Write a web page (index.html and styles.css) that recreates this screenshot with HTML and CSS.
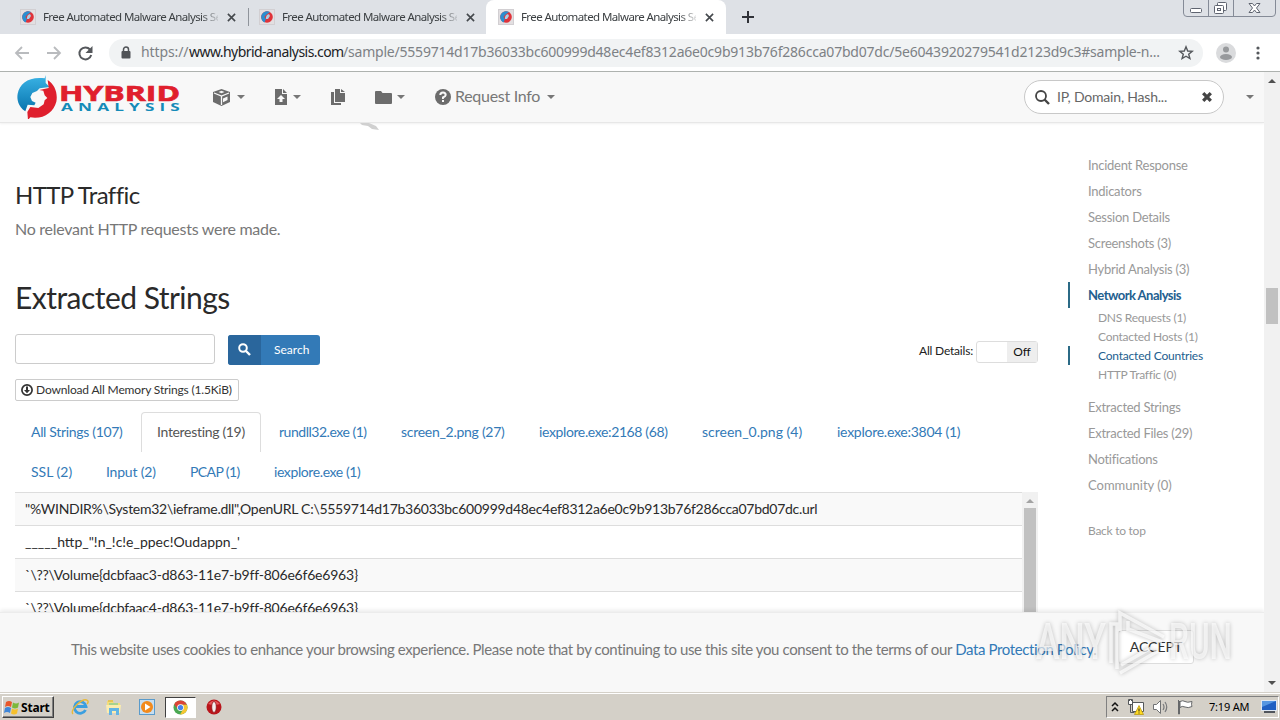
FILE: index.html
```html
<!DOCTYPE html>
<html lang="en">
<head>
    <meta charset="UTF-8">
    <meta name="viewport" content="width=device-width, initial-scale=1.0">
    <title>Free Automated Malware Analysis Service</title>
    <link rel="stylesheet" href="styles.css">
</head>
<body>

    <!-- Shared symbols -->
    <svg class="defs" width="0" height="0">
        <defs>
            <linearGradient id="blue" x1="0" y1="0" x2="0" y2="1"><stop offset="0" stop-color="#3bb4e6"/><stop offset="1" stop-color="#0874ae"/></linearGradient>
            <symbol id="swirl" viewBox="18 12 123 132">
                <path fill="url(#blue)" d="M107 12v24l12 12-30 4-8 8-14 6-6 12 5 12 11 5-4 8-20-2-7 20C24 106 20 84 23 68 29 38 56 16 104 22z"/>
                <path fill="#df1f2d" d="M113 27C134 40 144 66 139 92 131 124 99 146 61 139l-7 8-2-24 9-15 24 3 16-11 3-12 8-7-8-8-4-14-12-2 28-6z"/>
            </symbol>
            <symbol id="favicon" viewBox="0 0 16 16">
                <path fill="#d2cfd2" d="M0 0h16v16H0z"/>
                <path fill="#e3dfe1" d="M1 1h14v14H1z"/>
                <circle cx="8" cy="8" r="5.800" fill="#e0333a"/>
                <path fill="#2b8fd0" d="M11 3C7 1 2 4 2.200 8.500 2.400 11 4 13 5.500 13.500L7 10 5.500 8 7 6z"/>
                <path fill="#a9cfe6" d="M8 6l2-1 1 2-2 3-2 0 0-2z"/>
            </symbol>
            <symbol id="close" viewBox="0 0 10 10"><path d="M1 1l8 8M9 1L1 9" stroke="#45494d" stroke-width="1.800"/></symbol>
        </defs>
    </svg>

    <!-- Browser tabs -->
    <div class="tabstrip">
        <div class="tab">
            <svg class="favicon"><use href="#favicon"/></svg>
            <span class="tab-title">Free Automated Malware Analysis Se</span>
            <svg class="tab-close"><use href="#close"/></svg>
        </div>
        <div class="tab tab-second">
            <svg class="favicon"><use href="#favicon"/></svg>
            <span class="tab-title">Free Automated Malware Analysis Se</span>
            <svg class="tab-close"><use href="#close"/></svg>
        </div>
        <div class="tab tab-active">
            <svg class="favicon"><use href="#favicon"/></svg>
            <span class="tab-title">Free Automated Malware Analysis Se</span>
            <svg class="tab-close"><use href="#close"/></svg>
        </div>
        <svg class="new-tab" viewBox="0 0 12 12"><path d="M6 0v12M0 6h12" stroke="#303238" stroke-width="2"/></svg>
        <svg class="window-buttons" viewBox="0 0 94 18">
            <path d="M.5 0v13q0 3.500 3.500 3.500h85q3.500 0 3.500-3.500V0M25.500 0v16M50.500 0v16" fill="none" stroke="#858b97"/>
            <g fill="#fff" stroke="#5f6470">
                <rect x="7.500" y="8.500" width="11" height="4" rx="1"/>
                <rect x="34.500" y="2.500" width="9" height="8" rx="1"/>
                <rect x="31.500" y="5.500" width="9" height="8" rx="1"/>
                <rect x="34.500" y="8.500" width="3" height="2"/>
                <path d="M66 3.500h3.500l2 2.500 2-2.500H77L73.500 8l3.500 4.500h-3.500l-2-2.500-2 2.500H66L69.500 8z"/>
            </g>
        </svg>
    </div>

    <!-- Address bar -->
    <div class="toolbar">
        <svg class="nav-arrows" viewBox="0 0 80 18" fill="none" stroke="#b9bbbe" stroke-width="1.800">
            <path d="M15 9H2M8 3L2 9l6 6M33 9h13M40 3l6 6-6 6"/>
            <path stroke="#55585c" stroke-width="2" d="M76 5.500A6 6 0 1 0 77.200 11"/>
            <path fill="#55585c" stroke="none" d="M78.500 2v7h-7z"/>
        </svg>
        <div class="omnibox">
            <svg class="lock" viewBox="0 0 10 13"><path d="M2.500 6V3.500a2.500 2.500 0 0 1 5 0V6" fill="none" stroke="#505357" stroke-width="1.500"/><rect x=".5" y="5" width="9" height="7.500" rx="1" fill="#505357"/></svg>
            <span class="url url-scheme">https://</span><span class="url url-host">www.hybrid-analysis.com</span><span class="url url-path">/sample/5559714d17b36033bc600999d48ec4ef8312a6e0c9b913b76f286cca07bd07dc/5e6043920279541d2123d9c3#sample-n...</span>
            <svg class="star" viewBox="0 0 16 16"><path d="M8 1.800l1.700 4.200 4.500.300-3.500 2.900 1.200 4.400L8 11.200l-3.900 2.400 1.200-4.400L1.800 6.300 6.300 6z" fill="none" stroke="#55585c" stroke-width="1.400"/></svg>
        </div>
        <svg class="avatar" viewBox="0 0 20 20"><circle cx="10" cy="10" r="10" fill="#dadbdd"/><circle cx="10" cy="6.500" r="3" fill="#97999c"/><ellipse cx="10" cy="14" rx="6" ry="3" fill="#97999c"/></svg>
        <svg class="dots" viewBox="0 0 4 16" fill="#55585c"><circle cx="2" cy="3" r="1.600"/><circle cx="2" cy="8" r="1.600"/><circle cx="2" cy="13" r="1.600"/></svg>
    </div>

    <div class="viewport">
        <div class="page">

            <!-- Navbar -->
            <div class="navbar">
                <svg class="logo" viewBox="0 0 166 44">
                    <use href="#swirl" width="41" height="44"/>
                    <text x="43" y="25.500" textLength="121" lengthAdjust="spacingAndGlyphs" class="logo-top">HYBRID</text>
                    <text x="45" y="36" textLength="124" lengthAdjust="spacingAndGlyphs" class="logo-bottom">ANALYSIS</text>
                </svg>
                <div class="menu menu-box">
                    <svg width="17" height="17" viewBox="0 0 17 17"><path fill="#6c6c6c" d="M8.500 0L17 3v10l-8.500 4L0 13V3z"/><path d="M1 4l7.500 3L16 4M8.500 7v9" fill="none" stroke="#f8f8f8" stroke-width="1.300"/><path fill="#f8f8f8" d="M10 9.500l4.500-2v3.500L10 13.200zM5.500 3l3-1.200L11.500 3l-3 1.200z"/></svg>
                    <span class="caret"></span>
                </div>
                <div class="menu menu-upload">
                    <svg width="12" height="16" viewBox="0 0 12 16"><path fill="#6c6c6c" d="M0 0h7v5h5v11H0zM8 0l4 4H8z"/><path fill="#f8f8f8" d="M6 6l4 4H7.500v3h-3v-3H2z"/></svg>
                    <span class="caret"></span>
                </div>
                <div class="menu menu-files">
                    <svg width="14" height="16" viewBox="0 0 14 16"><path fill="#6c6c6c" d="M4 0h5v4h5v9H4zM10 0l4 3h-4zM0 3h3v11h7v2H0z"/></svg>
                </div>
                <div class="menu menu-folder">
                    <svg width="17" height="13" viewBox="0 0 17 13"><path fill="#6c6c6c" d="M0 1q0-1 1-1h5l1.500 2H16q1 0 1 1v9q0 1-1 1H1q-1 0-1-1z"/></svg>
                    <span class="caret"></span>
                </div>
                <div class="menu menu-info">
                    <svg width="16" height="16" viewBox="0 0 16 16"><circle cx="8" cy="8" r="8" fill="#6c6c6c"/><path d="M5.300 6q0-2.500 2.700-2.500T10.700 6Q10.700 7.300 8 8.500V10" fill="none" stroke="#f8f8f8" stroke-width="2"/><path fill="#f8f8f8" d="M7 11h2v2H7z"/></svg>
                    <span class="menu-label">Request Info</span>
                    <span class="caret"></span>
                </div>
                <div class="search-pill">
                    <svg width="15" height="15" viewBox="0 0 15 15" fill="none" stroke="#444"><circle cx="6" cy="6" r="5" stroke-width="1.800"/><path d="M9.500 9.500L14 14" stroke-width="2.400"/></svg>
                    <span class="search-hint">IP, Domain, Hash...</span>
                    <svg width="10" height="10" viewBox="0 0 10 10"><path d="M1.200 1.200l7.600 7.600M8.800 1.200L1.200 8.800" stroke="#444" stroke-width="3.300"/></svg>
                </div>
                <span class="caret caret-last"></span>
            </div>

            <div class="content">
                <div class="main">
                    <svg class="map-tip" viewBox="0 0 22 8"><path fill="#d0d0d0" d="M1 0h9l7 3 3 4-7-1-4-3-6-1z"/></svg>
                    <h3>HTTP Traffic</h3>
                    <p class="lead">No relevant HTTP requests were made.</p>
                    <h2>Extracted Strings</h2>

                    <div class="controls">
                        <div class="input"></div>
                        <div class="btn-search">
                            <span class="btn-icon"><svg width="13" height="13" viewBox="0 0 13 13" fill="none" stroke="#fff"><circle cx="5" cy="5" r="3.800" stroke-width="2"/><path d="M8 8l4 4" stroke-width="2.400"/></svg></span>
                            <span class="btn-label">Search</span>
                        </div>
                        <span class="details-label">All Details:</span>
                        <div class="toggle"><span class="toggle-off">Off</span></div>
                    </div>

                    <div class="btn-download">
                        <svg width="12" height="12" viewBox="0 0 12 12"><circle cx="6" cy="6" r="5.100" fill="none" stroke="#333" stroke-width="1.700"/><path fill="#333" d="M5 2.500h2V6h2L6 9.200 3 6h2z"/></svg>
                        <span>Download All Memory Strings (1.5KiB)</span>
                    </div>

                    <ul class="nav-tabs">
                        <li>All Strings (107)</li>
                        <li class="active">Interesting (19)</li>
                        <li>rundll32.exe (1)</li>
                        <li>screen_2.png (27)</li>
                        <li>iexplore.exe:2168 (68)</li>
                        <li>screen_0.png (4)</li>
                        <li>iexplore.exe:3804 (1)</li>
                        <li>SSL (2)</li>
                        <li>Input (2)</li>
                        <li>PCAP (1)</li>
                        <li>iexplore.exe (1)</li>
                    </ul>

                    <div class="strings">
                        <div class="rows">
                            <div class="row"><span class="str-url">"%WINDIR%\System32\ieframe.dll",OpenURL C:\5559714d17b36033bc600999d48ec4ef8312a6e0c9b913b76f286cca07bd07dc.url</span></div>
                            <div class="row"><span class="str-http">_____http_"!n_!c!e_ppec!Oudappn_'</span></div>
                            <div class="row"><span class="str-vol">`\??\Volume{dcbfaac3-d863-11e7-b9ff-806e6f6e6963}</span></div>
                            <div class="row"><span class="str-vol">`\??\Volume{dcbfaac4-d863-11e7-b9ff-806e6f6e6963}</span></div>
                        </div>
                        <div class="inner-scroll">
                            <span class="arrow-up arrow-pale"></span>
                            <span class="inner-thumb"></span>
                        </div>
                    </div>
                </div>

                <!-- Side navigation -->
                <div class="sidenav">
                    <a>Incident Response</a>
                    <a>Indicators</a>
                    <a>Session Details</a>
                    <a>Screenshots (3)</a>
                    <a>Hybrid Analysis (3)</a>
                    <a class="current">Network Analysis</a>
                    <div class="sub">
                        <a>DNS Requests (1)</a>
                        <a>Contacted Hosts (1)</a>
                        <a class="current">Contacted Countries</a>
                        <a>HTTP Traffic (0)</a>
                    </div>
                    <a>Extracted Strings</a>
                    <a>Extracted Files (29)</a>
                    <a>Notifications</a>
                    <a class="community">Community (0)</a>
                    <a class="back">Back to top</a>
                </div>
            </div>

            <!-- Cookie notice -->
            <div class="cookie">
                <span class="cookie-text">This website uses cookies to enhance your browsing experience. Please note that by continuing to use this site you consent to the terms of our <span class="cookie-link">Data Protection Policy</span>.</span>
                <span class="accept">ACCEPT</span>
            </div>
        </div>

        <div class="scrollbar">
            <span class="arrow-up"></span>
            <span class="thumb"></span>
            <span class="arrow-down"></span>
        </div>
    </div>

    <!-- Taskbar -->
    <div class="taskbar">
        <div class="start">
            <svg width="16" height="15" viewBox="0 0 16 15"><path fill="#e8572a" d="M2 2q3-2 6 0L7 7Q4 5 1 7z"/><path fill="#7cb83a" d="M9 2.500q3 2 6 0L14 7.500q-3 2-6 0z"/><path fill="#3f86d8" d="M1 8q3-2 6 0l-1 5q-3-2-6 0z"/><path fill="#f6c02c" d="M8 8.500q3 2 6 0l-1 5q-3 2-6 0z"/></svg>
            <span>Start</span>
        </div>
        <svg class="quick quick-ie" viewBox="0 0 18 18"><path d="M14.500 12A5.800 5.800 0 1 1 15 8.500H5" fill="none" stroke="#3b9fe0" stroke-width="2.800"/><path d="M2 16C-2 12 12-1 16.500 2.500 17.500 3.500 17 5 16 6" fill="none" stroke="#e8b93a" stroke-width="1.400"/></svg>
        <svg class="quick" viewBox="0 0 18 18"><path fill="#f3dc7c" d="M2 3h6l1 2h6v10H2z"/><path fill="#e6c455" d="M3 2h5v2H3z"/><path fill="#a7d28d" d="M4 5h9v2H4z"/><path fill="#fbecae" d="M1 7h15l-1 8H2z"/><path fill="#62b4e4" d="M4 10h10v7h-3v-4H7v4H4z"/></svg>
        <svg class="quick" viewBox="0 0 18 18"><rect x="1.500" y="1.500" width="15" height="15" fill="#c7def0" stroke="#5a9bcb"/><circle cx="9" cy="9" r="6" fill="#f28a1c"/><path fill="#fff" d="M7 5.500l5.500 3.500L7 12.500z"/></svg>
        <div class="task-active">
            <svg width="15" height="15" viewBox="0 0 16 16"><circle cx="8" cy="8" r="7.500" fill="#4aa852"/><path fill="#dc4437" d="M1.300 4.500A7.500 7.500 0 0 1 14.800 5H8L5 9.500z"/><path fill="#f6c632" d="M14.800 5A7.500 7.500 0 0 1 7.500 15.500L11 9.500 9 5z"/><circle cx="8" cy="8" r="3.600" fill="#fff"/><circle cx="8" cy="8" r="2.800" fill="#4583ec"/></svg>
        </div>
        <svg class="quick quick-opera" viewBox="0 0 18 18"><circle cx="9" cy="9" r="7.500" fill="#b9151b"/><path fill="#e8565a" d="M3 6q6-7 12 0-6 2-12 0z"/><ellipse cx="9" cy="9" rx="2.300" ry="5.500" fill="#f4eeee" stroke="#8c1418" stroke-width=".8"/></svg>
        <div class="tray">
            <svg width="10" height="12" viewBox="0 0 10 12" fill="none" stroke="#111" stroke-width="1.500"><path d="M2 5l3-3 3 3M2 10l3-3 3 3"/></svg>
            <svg width="16" height="16" viewBox="0 0 16 16"><path fill="#fff" stroke="#55585a" d="M4.500 3.500h11v9h-11zM.5.500h4v5h-4z"/><path d="M2.500 5.500v8h4M1.500 0v2M3.500 0v2" fill="none" stroke="#55585a"/><path fill="#ffda22" stroke="#b29108" stroke-width=".7" d="M11 6.500l4.500 9h-9z"/><path d="M11 9.500v3m0 1v1" stroke="#222"/></svg>
            <svg width="17" height="16" viewBox="0 0 17 16"><path fill="#fff" stroke="#707274" d="M1.500 5.500h3l4-4v13l-4-4h-3z"/><path d="M11 5q2 3 0 6M13 3q3.500 5 0 10" fill="none" stroke="#77797b" stroke-width="1.200"/></svg>
            <svg width="17" height="16" viewBox="0 0 17 16"><path fill="#fff" stroke="#66686a" d="M1.500 1v14h1V2M3 2.500q3-1.500 5 0t7 0q-1 3 0 5-4 2-7 .5t-5 .5z"/></svg>
            <span class="clock">7:19 AM</span>
            <svg width="16" height="14" viewBox="0 0 16 14"><path fill="#dfe7f2" d="M0 0h16v11H0z"/><path fill="#1f5fc2" d="M1 1h14v9H1z"/><path fill="#5596e2" d="M1 1h14L1 7z"/><path fill="#50555c" d="M3 11h11v2H3z"/></svg>
        </div>
    </div>

    <!-- Watermark -->
    <svg class="watermark" viewBox="0 0 214 68">
        <text x="2" y="50.500" textLength="70" lengthAdjust="spacingAndGlyphs">ANY</text>
        <text x="135" y="50.500" textLength="63" lengthAdjust="spacingAndGlyphs">RUN</text>
        <path d="M77 55V16h6v45M86 23V5l44 24M94 23V13M94 21l34 13M86 65l38-22M87 57l30-17"/>
    </svg>

</body>
</html>
```
FILE: styles.css
```css
* {
    box-sizing: border-box;
}

body {
    margin: 0;
    width: 1280px;
    height: 720px;
    overflow: hidden;
    display: flex;
    flex-direction: column;
    font-family: Lato, sans-serif;
    font-size: 14px;
    color: #333;
    background-color: #fff;
    white-space: nowrap;
}

svg {
    flex: none;
}

.defs {
    position: absolute;
}

/* Browser tabs */
.tabstrip {
    height: 34px;
    flex: none;
    display: flex;
    background-color: #dee1e6;
    font-family: "Noto Sans", sans-serif;
    font-size: 11.5px;
}

.tab {
    width: 248px;
    height: 34px;
    padding-left: 20px;
    display: flex;
    align-items: center;
    color: #3c4043;
}

.tab-second {
    width: 238px;
    padding-left: 11px;
    background: linear-gradient(#8f949b, #8f949b) 0 8px / 1px 18px no-repeat;
}

.tab-active {
    width: 240px;
    padding-left: 12px;
    background-color: #fff;
    border-radius: 8px 8px 0 0;
}

.favicon {
    width: 16px;
    height: 16px;
}

.tab-title {
    width: 175px;
    margin: 0 0 1px 7px;
    letter-spacing: -0.6px;
    -webkit-mask-image: linear-gradient(to right, #000 158px, transparent 178px);
    mask-image: linear-gradient(to right, #000 158px, transparent 178px);
}

.tab-close {
    width: 9px;
    height: 9px;
    margin-left: 9px;
}

.new-tab {
    width: 12px;
    height: 12px;
    margin: 11px 0 0 16px;
}

.window-buttons {
    width: 94px;
    height: 18px;
    margin-left: auto;
    margin-right: 3px;
}

/* Address bar */
.toolbar {
    height: 38px;
    flex: none;
    display: flex;
    align-items: center;
    border-bottom: 1px solid #aeb2af;
    background-color: #fff;
}

.nav-arrows {
    width: 80px;
    height: 18px;
    margin-left: 14px;
}

.omnibox {
    width: 1094px;
    height: 28px;
    margin-left: 15px;
    padding-left: 12px;
    display: flex;
    align-items: center;
    border-radius: 14px;
    background-color: #f1f3f4;
}

.lock {
    width: 10px;
    height: 13px;
    margin-right: 10px;
}

.url {
    flex: none;
    margin-bottom: 2px;
    font-family: "Noto Sans", sans-serif;
    font-size: 14px;
    color: #7d8185;
}

.url-scheme {
    width: 48px;
    letter-spacing: -0.1px;
}

.url-host {
    width: 154px;
    color: #202124;
    letter-spacing: -0.55px;
}

.url-path {
    width: 818px;
    letter-spacing: -0.21px;
}

.star {
    width: 16px;
    height: 16px;
    margin-left: 17px;
}

.avatar {
    width: 20px;
    height: 20px;
    margin-left: 13px;
}

.dots {
    width: 4px;
    height: 16px;
    margin-left: 20px;
}

/* Page viewport */
.viewport {
    height: 620px;
    flex: none;
    display: flex;
}

.page {
    position: relative;
    width: 1264px;
    overflow: hidden;
}

.scrollbar {
    width: 16px;
    display: flex;
    flex-direction: column;
    align-items: center;
    background-color: #f1f1f1;
}

.arrow-up,
.arrow-down {
    border-left: 4px solid transparent;
    border-right: 4px solid transparent;
}

.arrow-up {
    margin-top: 7px;
    border-bottom: 4px solid #505050;
}

.arrow-pale {
    border-bottom-color: #a3a3a3;
}

.arrow-down {
    margin: auto 0 7px;
    border-top: 4px solid #505050;
}

.thumb {
    width: 12px;
    height: 36px;
    margin-top: 205px;
    background-color: #c1c1c1;
}

/* Navbar */
.navbar {
    height: 51px;
    display: flex;
    align-items: center;
    background-color: #f8f8f8;
    border-bottom: 1px solid #e7e7e7;
    box-shadow: 0 1px 2px rgba(0, 0, 0, 0.06);
    color: #777;
}

.logo {
    width: 166px;
    height: 44px;
    margin-left: 16px;
}

.logo-top {
    font: 700 22px "Open Sans", sans-serif;
    fill: #e01f2d;
    stroke: #e01f2d;
    stroke-width: 0.7px;
}

.logo-bottom {
    font: 700 10px "Open Sans", sans-serif;
    letter-spacing: 3px;
    fill: #148bb8;
}

.menu {
    display: flex;
    align-items: center;
}

.caret {
    margin-left: 8px;
    border-top: 4px solid #777;
    border-left: 4px solid transparent;
    border-right: 4px solid transparent;
}

.menu-box {
    margin-left: 31px;
}

.menu-box .caret {
    margin-left: 7px;
}

.menu-upload {
    margin-left: 30px;
}

.menu-upload .caret {
    margin-left: 6px;
}

.menu-files {
    margin-left: 30px;
}

.menu-folder {
    margin-left: 30px;
}

.menu-folder .caret {
    margin-left: 5px;
}

.menu-info {
    margin-left: 30px;
}

.menu-label {
    width: 86px;
    margin: 0 0 3px 4px;
    font-size: 16px;
    letter-spacing: -0.3px;
}

.menu-info .caret {
    margin-left: 6px;
}

.search-pill {
    width: 200px;
    height: 34px;
    margin-left: auto;
    padding: 0 11px 0 10px;
    display: flex;
    align-items: center;
    border: 1px solid #c8c8c8;
    border-radius: 17px;
    background-color: #fff;
}

.search-hint {
    width: 145px;
    margin: 0 0 2px 7px;
    color: #666;
    letter-spacing: -0.2px;
}

.caret-last {
    margin: 0 10px 0 22px;
}

/* Main content */
.content {
    display: flex;
}

.main {
    width: 1023px;
    margin-left: 15px;
}

.map-tip {
    display: block;
    width: 22px;
    height: 8px;
    margin-left: 344px;
}

h2,
h3 {
    margin: 0;
    font-weight: 400;
    color: #2a2a2a;
}

h3 {
    margin-top: 50px;
    font-size: 24px;
    line-height: 28px;
    letter-spacing: -0.6px;
}

.lead {
    margin: 9px 0 0;
    font-size: 16px;
    line-height: 22px;
    letter-spacing: -0.27px;
    color: #777;
}

h2 {
    margin-top: 40px;
    font-size: 30px;
    line-height: 34px;
    letter-spacing: -0.53px;
}

.controls {
    margin-top: 20px;
    display: flex;
    align-items: center;
    height: 30px;
}

.input {
    width: 200px;
    height: 30px;
    border: 1px solid #ccc;
    border-radius: 3px;
}

.btn-search {
    width: 92px;
    height: 30px;
    margin: 1px 0 0 13px;
    display: flex;
    border-radius: 3px;
    overflow: hidden;
    background-color: #337ab7;
    color: #fff;
    font-size: 12px;
}

.btn-icon {
    width: 33px;
    display: flex;
    align-items: center;
    justify-content: center;
    background-color: #2a669c;
}

.btn-label {
    margin-left: 13px;
    line-height: 30px;
}

.details-label {
    width: 57px;
    margin: 3px 0 0 auto;
    color: #222;
    font-size: 12px;
    letter-spacing: -0.2px;
}

.toggle {
    width: 62px;
    height: 22px;
    margin-top: 5px;
    padding-left: 30px;
    border: 1px solid #ddd;
    border-radius: 3px;
    font-size: 12px;
    line-height: 20px;
    color: #111;
}

.toggle-off {
    display: block;
    text-align: center;
    background-color: #eee;
}

.btn-download {
    width: 224px;
    height: 22px;
    margin-top: 15px;
    padding: 0 0 1px 5px;
    display: flex;
    align-items: center;
    gap: 3px;
    border: 1px solid #ccc;
    border-radius: 2px;
    font-size: 12px;
    letter-spacing: -0.16px;
}

.nav-tabs {
    margin: 11px 0 0;
    padding: 0;
    display: flex;
    flex-wrap: wrap;
    list-style: none;
    color: #337ab7;
    letter-spacing: -0.32px;
}

.nav-tabs li {
    height: 40px;
    padding-left: 16px;
    line-height: 39px;
}

.nav-tabs .active {
    width: 120px;
    margin-right: 2px;
    padding-left: 15px;
    border: 1px solid #ddd;
    border-bottom: none;
    border-radius: 4px 4px 0 0;
    line-height: 37px;
    color: #555;
}

.nav-tabs li:nth-child(1) { width: 126px; }
.nav-tabs li:nth-child(3) { width: 122px; letter-spacing: -0.48px; }
.nav-tabs li:nth-child(4) { width: 138px; letter-spacing: -0.28px; }
.nav-tabs li:nth-child(5) { width: 163px; letter-spacing: -0.38px; }
.nav-tabs li:nth-child(6) { width: 135px; letter-spacing: 0; }
.nav-tabs li:nth-child(7) { width: 156px; letter-spacing: -0.26px; }
.nav-tabs li:nth-child(8) { width: 75px; letter-spacing: 0; }
.nav-tabs li:nth-child(9) { width: 84px; letter-spacing: -0.2px; }
.nav-tabs li:nth-child(10) { width: 84px; letter-spacing: -0.6px; }
.nav-tabs li:nth-child(11) { letter-spacing: -0.4px; }

.strings {
    display: flex;
}

.rows {
    width: 1007px;
}

.row {
    height: 33px;
    padding-left: 10px;
    border-top: 1px solid #ddd;
    line-height: 31px;
    color: #2a2a2a;
}

.row:nth-child(odd) {
    background-color: #f9f9f9;
}

.str-url {
    letter-spacing: -0.28px;
}

.str-vol {
    letter-spacing: -0.21px;
}

.inner-scroll {
    width: 16px;
    padding-right: 1px;
    display: flex;
    flex-direction: column;
    align-items: center;
    background-color: #f1f1f1;
}

.inner-thumb {
    width: 12px;
    flex: 1;
    margin-top: 5px;
    background-color: #c1c1c1;
}

/* Side navigation */
.sidenav {
    width: 196px;
    margin-left: 30px;
    padding-top: 29px;
    display: flex;
    flex-direction: column;
    color: #999;
    font-size: 13px;
    letter-spacing: -0.26px;
}

.sidenav a {
    height: 26px;
    padding-left: 20px;
    line-height: 26px;
}

.sidenav .sub {
    display: flex;
    flex-direction: column;
    padding-bottom: 10px;
}

.sidenav .sub a {
    height: 19px;
    padding-left: 30px;
    font-size: 12px;
    line-height: 19px;
}

.sidenav .current {
    padding-left: 18px;
    border-left: 2px solid #2b6a86;
    color: #23608f;
    font-weight: 700;
    letter-spacing: -0.53px;
}

.sidenav .sub .current {
    padding-left: 28px;
    font-weight: 400;
    letter-spacing: -0.2px;
}

.sidenav .community {
    letter-spacing: 0;
}

.sidenav .back {
    margin-top: 20px;
    font-size: 12px;
}

/* Cookie notice */
.cookie {
    position: absolute;
    left: 0;
    right: 0;
    bottom: 0;
    height: 80px;
    padding-left: 71px;
    display: flex;
    align-items: center;
    background-color: #f8f8f8;
    border-top: 1px solid #ececec;
    box-shadow: 0 -2px 4px rgba(0, 0, 0, 0.08);
    color: #777;
    font-size: 15px;
}

.cookie-text {
    width: 1047px;
    margin-top: -8px;
    letter-spacing: -0.382px;
}

.cookie-link {
    color: #337ab7;
}

.accept {
    width: 76px;
    height: 34px;
    margin-top: -12px;
    border: 1px solid #ddd;
    border-radius: 3px;
    background-color: #fff;
    color: #333;
    font-size: 14px;
    line-height: 31px;
    text-align: center;
}

/* Taskbar */
.taskbar {
    flex: none;
    height: 28px;
    padding: 1px 1px 0 2px;
    display: flex;
    align-items: center;
    border-top: 1px solid #d4d0c8;
    background-color: #d4d0c8;
    box-shadow: inset 0 1px 0 #fff;
    font-family: "Noto Sans", sans-serif;
    font-size: 11px;
    color: #000;
}

.start {
    width: 52px;
    height: 22px;
    padding-left: 1px;
    display: flex;
    align-items: center;
    gap: 1px;
    border: 1px solid;
    border-color: #fff #404040 #404040 #fff;
    box-shadow: inset -1px -1px 0 #808080;
    font-weight: 700;
    font-size: 12px;
    letter-spacing: -0.2px;
}

.quick {
    width: 18px;
    height: 18px;
    margin-left: 15.5px;
}

.quick-ie {
    margin-left: 17px;
}

.quick-opera {
    margin-left: 9px;
}

.task-active {
    width: 31px;
    height: 21px;
    margin-left: 9px;
    display: flex;
    align-items: center;
    justify-content: center;
    border: 1px solid;
    border-color: #404040 #fff #fff #404040;
    background-color: #fff;
}

.tray {
    width: 173px;
    height: 22px;
    margin-left: auto;
    padding: 0 1px 1px 3px;
    display: flex;
    align-items: center;
    gap: 8px;
    border: 1px solid;
    border-color: #808080 #fff #fff #808080;
}

.clock {
    width: 44px;
    margin-left: 7px;
    letter-spacing: -0.2px;
}

/* Watermark */
.watermark {
    position: absolute;
    left: 1034px;
    top: 608px;
    width: 214px;
    height: 68px;
    font: 500 50px Roboto, sans-serif;
    fill: rgba(255, 255, 255, 0.65);
    filter: drop-shadow(0 0 2px rgba(0, 0, 0, 0.35));
}

.watermark path {
    fill: none;
    stroke: rgba(255, 255, 255, 0.7);
    stroke-width: 3.5px;
}
```
